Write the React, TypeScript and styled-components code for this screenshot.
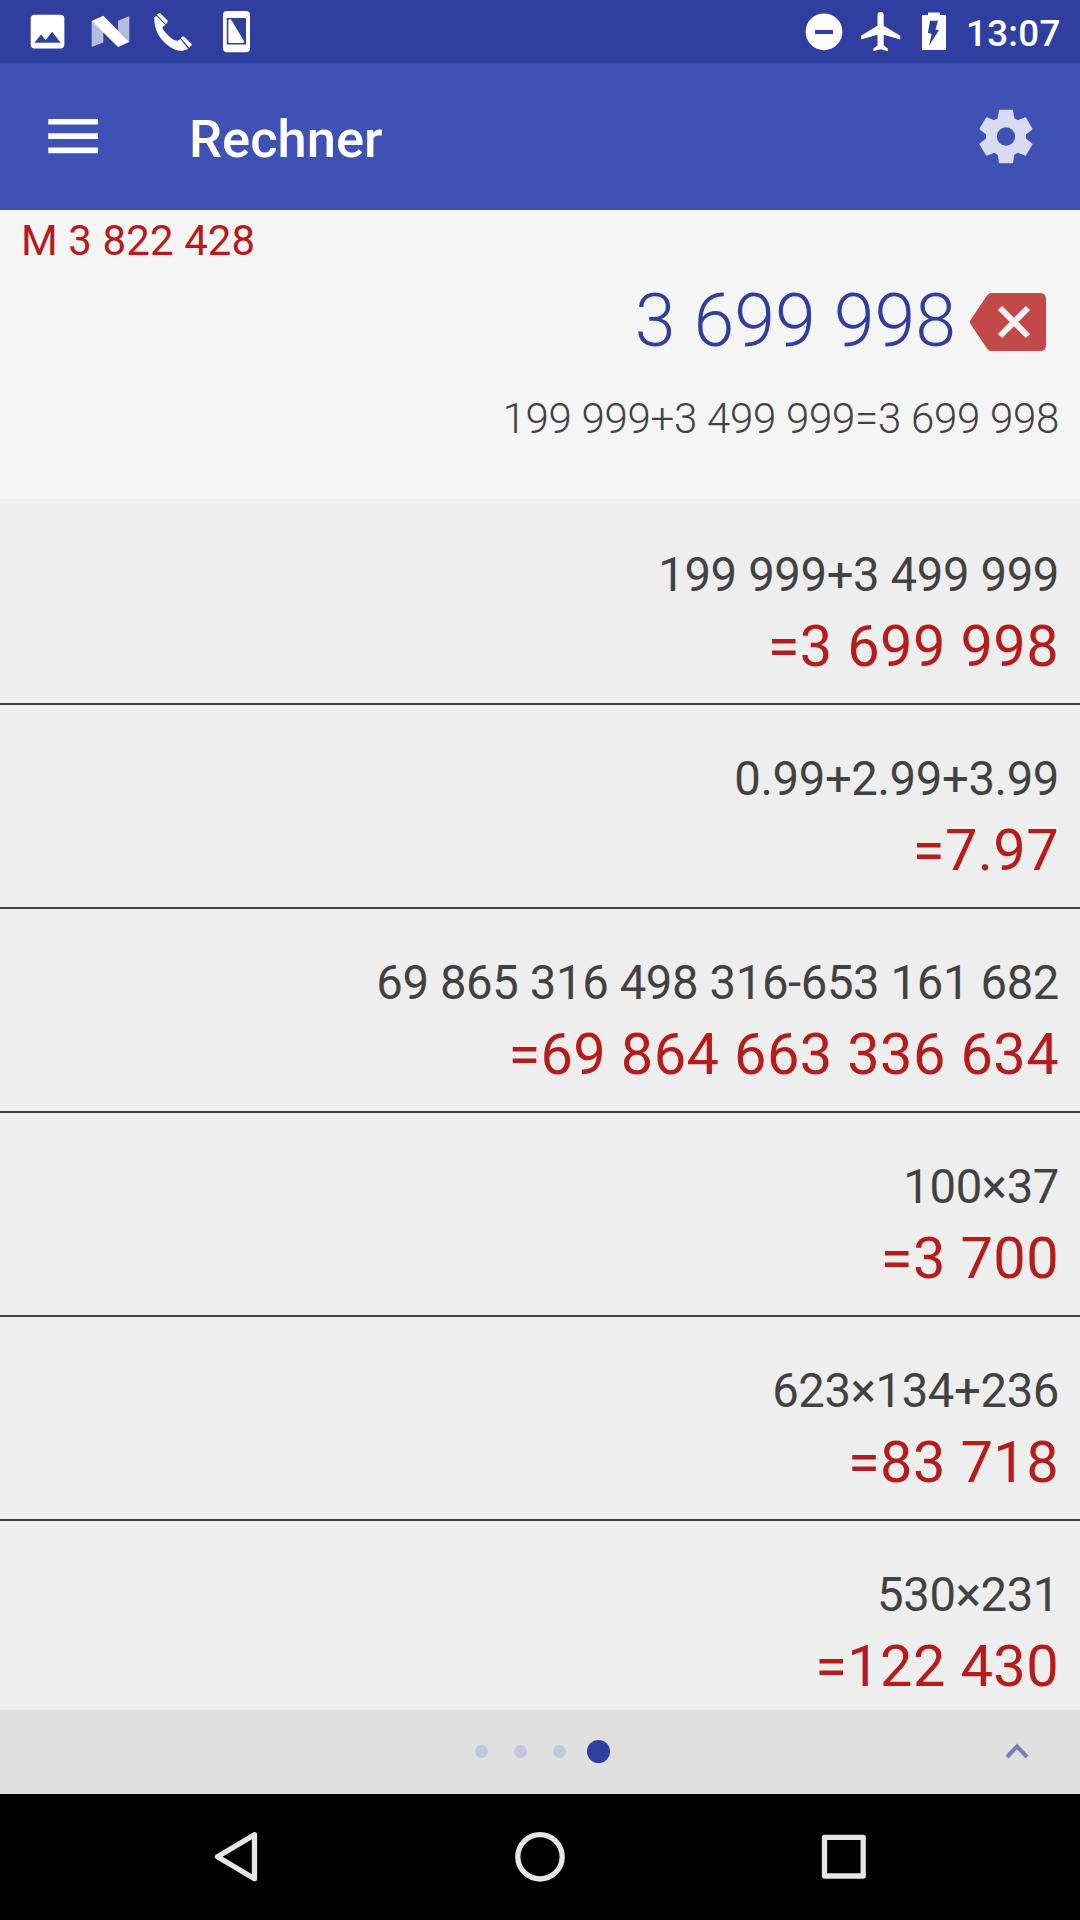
import React from 'react'
import styled, { createGlobalStyle } from 'styled-components'

const GlobalStyle = createGlobalStyle`
  * {
    margin: 0;
    padding: 0;
    box-sizing: border-box;
  }

  body {
    font-family: Roboto, sans-serif;
  }

  svg {
    display: block;
    flex-shrink: 0;
  }
`;

const Screen = styled.div`
  width: 1080px;
  height: 1920px;
  display: flex;
  flex-direction: column;
  overflow: hidden;
  background-color: #eeeeee;
`;

const StatusBar = styled.div`
  height: 63px;
  flex-shrink: 0;
  display: flex;
  justify-content: space-between;
  background-color: #303f9f;
`;

const StatusGroup = styled.div`
  display: flex;
`;

const Clock = styled.span`
  width: 114px;
  padding-right: 21px;
  text-align: right;
  font-weight: 500;
  font-size: 36.75px;
  line-height: 67px;
  letter-spacing: 0.3px;
  color: #ffffff;
`;

const AppBar = styled.header`
  height: 147px;
  flex-shrink: 0;
  display: flex;
  align-items: center;
  padding: 0 42px;
  background-color: #3f51b5;
`;

const Title = styled.h1`
  flex: 1;
  margin-left: 87px;
  padding-top: 4px;
  font-weight: 500;
  font-size: 52.5px;
  line-height: 62px;
  color: #ffffff;
`;

const IconButton = styled.button`
  display: flex;
  border: none;
  background: none;
`;

const Display = styled.section`
  height: 289px;
  flex-shrink: 0;
  background-color: #f5f5f5;
`;

const Memory = styled.p`
  padding: 6px 21px 0;
  font-size: 42px;
  line-height: 50px;
  letter-spacing: 0.1px;
  color: #b71c1c;
`;

const Current = styled.div`
  display: flex;
  align-items: center;
  justify-content: flex-end;
  gap: 13px;
  height: 86px;
  margin-top: 12px;
  padding-right: 33px;
`;

const Value = styled.span`
  font-weight: 300;
  font-size: 73.5px;
  line-height: 86px;
  color: #303f9f;
`;

const DeleteButton = styled(IconButton)`
  margin-top: 4px;
`;

const Equation = styled.p`
  margin-top: 30px;
  padding-right: 21px;
  text-align: right;
  font-weight: 300;
  font-size: 42px;
  line-height: 50px;
  letter-spacing: -0.28px;
  color: #424242;
`;

const History = styled.ul`
  flex: 1;
  min-height: 0;
  padding-top: 2px;
  overflow: hidden;
  list-style: none;
`;

const HistoryItem = styled.li`
  height: 204px;
  padding: 46px 21px 0;
  border-bottom: 2px solid #424242;
  text-align: right;
`;

const Expression = styled.p`
  font-size: 47.25px;
  line-height: 56px;
  letter-spacing: -0.38px;
  color: #424242;
`;

const Result = styled.p`
  padding-top: 9px;
  font-size: 57.75px;
  line-height: 68px;
  letter-spacing: 0.38px;
  color: #b71c1c;
`;

const Pager = styled.div`
  height: 84px;
  flex-shrink: 0;
  display: grid;
  grid-template-columns: 1fr auto 1fr;
  align-items: center;
  padding-bottom: 2px;
  background-color: #e0e0e0;
`;

const Dots = styled.div`
  grid-column: 2;
  display: flex;
  align-items: center;
`;

const DotCell = styled.span`
  width: 39px;
  display: flex;
  justify-content: center;
`;

const Dot = styled.span<{ $active: boolean }>`
  width: ${({ $active }) => ($active ? 23 : 13)}px;
  height: ${({ $active }) => ($active ? 23 : 13)}px;
  border-radius: 50%;
  background-color: ${({ $active }) => ($active ? '#303f9f' : '#c1c5df')};
`;

const ExpandButton = styled(IconButton)`
  justify-self: end;
  margin-right: 50px;
`;

const NavBar = styled.nav`
  height: 126px;
  flex-shrink: 0;
  display: flex;
  align-items: center;
  justify-content: center;
  gap: 243px;
  background-color: #000000;
`;

const history = [
  { id: 1, expression: '199 999+3 499 999', result: '3 699 998' },
  { id: 2, expression: '0.99+2.99+3.99', result: '7.97' },
  { id: 3, expression: '69 865 316 498 316-653 161 682', result: '69 864 663 336 634' },
  { id: 4, expression: '100×37', result: '3 700' },
  { id: 5, expression: '623×134+236', result: '83 718' },
  { id: 6, expression: '530×231', result: '122 430' },
];

const pages = [1, 2, 3, 4];
const activePage = 4;

const NotificationIcons = () => (
  <svg width="260" height="63" viewBox="0 0 260 63" fill="#fff">
    <path transform="translate(25.1 9.2) scale(1.87)" d="M21 19V5c0-1.1-.9-2-2-2H5c-1.1 0-2 .9-2 2v14c0 1.1.9 2 2 2h14c1.1 0 2-.9 2-2zM8.5 13.5l2.5 3.01L14.5 12l4.5 6H5l3.500-4.500z" />
    <path opacity=".65" d="M91.700 21L103.300 32V42.500L91.700 47zM118 20.700L129.300 16V42L118 30.500z" />
    <path d="M91.700 21L103.300 15.700L129.300 42L118 47z" />
    <path d="M154.300 18C154 30 160 39.500 168 45.500C175 50.800 182 52.500 188 48.700L180.300 39C178 41.500 175.500 41.300 172 38.800C167.500 35 164 31 162.700 28.800C162 27 164 26 165.300 25L156.800 16.200Q154.500 16 154.300 18z" />
    <path d="M156.900 14.800L158.800 13.300Q159.800 12.800 160.800 13.700L167.500 20.500Q168.200 21.500 167.500 22.300L165.900 24.200zM180.900 38L182.600 36.600Q183.500 36.200 184.300 37L191.500 43.800Q192.200 44.800 191.400 45.600L189.200 47.800z" />
    <path fillRule="evenodd" d="M227 11H246Q250 11 250 15V48.300Q250 52.300 246 52.300H227Q223 52.300 223 48.300V15Q223 11 227 11zM226.800 18V44.500H246V18z" />
    <path d="M228.300 21Q228.300 18.500 231 19.500L244 41Q244.500 43 242.500 43H230Q228.300 43 228.300 41.500z" />
  </svg>
)

const SystemIcons = () => (
  <svg width="180" height="63" viewBox="786 0 180 63" fill="#fff">
    <path fillRule="evenodd" d="M824 13.400a18.400 18.400 0 1 0 0 36.800a18.400 18.400 0 1 0 0-36.800zM815 30H833V34H815z" />
    <path transform="translate(856.800 8.200) scale(2.070 1.960)" d="M21 16v-2l-8-5V3.500c0-.83-.67-1.500-1.500-1.500S10 2.670 10 3.500V9l-8 5v2l8-2.500V19l-2 1.500V22l3.500-1 3.500 1v-1.500L13 19v-5.500l8 2.500z" />
    <path fillRule="evenodd" d="M928 12.500H940V15H946V50H922V15H928zM930 20.700L928 32.700L931.700 34L929 45.700L939 30.300L935.500 29.500L938 20.700z" />
  </svg>
)

const MenuIcon = () => (
  <svg width="60" height="60" viewBox="0 0 60 60" fill="#fff">
    <path d="M6.300 12H56V17.600H6.300zM6.300 26.300H56V31.900H6.300zM6.300 40.600H56V46.300H6.300z" />
  </svg>
)

const SettingsIcon = () => (
  <svg width="64" height="64" viewBox="-32 -31.500 64 64" fill="#d9dcf0">
    <path fillRule="evenodd" d="M0-20a20 20 0 1 0 0 40a20 20 0 1 0 0-40zM0-9.200a9.200 9.200 0 1 1 0 18.400a9.200 9.200 0 1 1 0-18.400z" />
    {[0, 60, 120, 180, 240, 300].map((angle) => (
      <path key={angle} transform={`rotate(${angle})`} d="M-6.300-26.800H6.300L7-26.300L8.500-17L-8.500-17L-7-26.300z" />
    ))}
  </svg>
)

const BackspaceIcon = () => (
  <svg width="78" height="60" viewBox="0 0 78 60">
    <path d="M22 0H71Q77 0 77 6V52Q77 58 71 58H22Q19.500 58 18 55.500L1.500 31Q.5 29 1.500 27L18 2.500Q19.500 0 22 0z" fill="#c34848" />
    <path d="M31 15L59 43M59 15L31 43" stroke="#f5f5f5" strokeWidth="6" />
  </svg>
)

const App = () => {
  return (
    <>
      <GlobalStyle />
      <Screen>
        <StatusBar>
          <NotificationIcons />
          <StatusGroup>
            <SystemIcons />
            <Clock>13:07</Clock>
          </StatusGroup>
        </StatusBar>
        <AppBar>
          <IconButton aria-label="Menü"><MenuIcon /></IconButton>
          <Title>Rechner</Title>
          <IconButton aria-label="Einstellungen"><SettingsIcon /></IconButton>
        </AppBar>
        <Display>
          <Memory>M 3 822 428</Memory>
          <Current>
            <Value>3 699 998</Value>
            <DeleteButton aria-label="Löschen"><BackspaceIcon /></DeleteButton>
          </Current>
          <Equation>199 999+3 499 999=3 699 998</Equation>
        </Display>
        <History>
          {history.map(({ id, expression, result }) => (
            <HistoryItem key={id}>
              <Expression>{expression}</Expression>
              <Result>={result}</Result>
            </HistoryItem>
          ))}
        </History>
        <Pager>
          <Dots>
            {pages.map((page) => (
              <DotCell key={page}><Dot $active={page === activePage} /></DotCell>
            ))}
          </Dots>
          <ExpandButton aria-label="Öffnen">
            <svg width="26" height="20" viewBox="0 0 26 20" fill="none" stroke="#757dbd" strokeWidth="4">
              <path d="M3 16L13 5.500L23 16" />
            </svg>
          </ExpandButton>
        </Pager>
        <NavBar>
          <svg width="60" height="60" viewBox="0 0 60 60" fill="none" stroke="#e6e6e6" strokeWidth="5.300" strokeLinejoin="round">
            <path d="M10.500 29.700L47.500 7.700V51.700z" />
          </svg>
          <svg width="60" height="60" viewBox="0 0 60 60" fill="none" stroke="#e6e6e6" strokeWidth="5.300">
            <circle cx="30" cy="29.800" r="22.200" />
          </svg>
          <svg width="60" height="60" viewBox="0 0 60 60" fill="none" stroke="#e6e6e6" strokeWidth="5.300" strokeLinejoin="round">
            <rect x="11.500" y="10.300" width="38.700" height="38.700" />
          </svg>
        </NavBar>
      </Screen>
    </>
  )
}

export default App
